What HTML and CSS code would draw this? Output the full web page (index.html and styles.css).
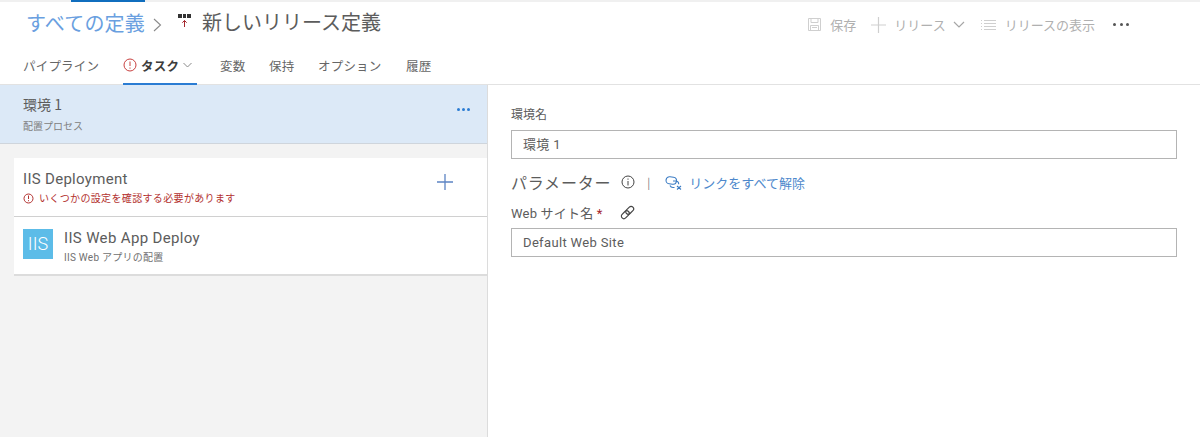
FILE: index.html
```html
<!DOCTYPE html>
<html lang="ja">
<head>
<meta charset="utf-8">
<title>新しいリリース定義</title>
<link rel="stylesheet" href="styles.css">
</head>
<body>
<div class="topstrip"><div class="topstrip-mark"></div></div>
<header class="head">
  <div class="titlebar">
    <div class="crumbs">
      <a class="crumb">すべての定義</a>
      <svg class="crumb-sep" width="9" height="16" viewBox="0 0 9 16"><path d="M1 2l6.500 6-6.500 6" fill="none" stroke="#8a8a8a" stroke-width="1.100"/></svg>
      <svg class="rel-icon" width="15" height="15" viewBox="0 0 15 15"><path d="M1 1h4v4H1zM6 1h3v4H6zM10 1h4v4h-4z" fill="#333"/><path d="M7.500 14V7.500M5.300 9.700l2.200-2.200 2.200 2.200" fill="none" stroke="#a4262c" stroke-width="1"/></svg>
      <h1 class="title">新しいリリース定義</h1>
    </div>
    <div class="commands">
      <span class="cmd cmd-save"><svg width="15" height="15" viewBox="0 0 15 15" fill="none" stroke="#cfcfcf" stroke-width="1"><path d="M1.500 1.500h12v12h-12zM4 1.500v4h7v-4M3.500 13.500v-5h8v5M5 10.500h5"/></svg>保存</span>
      <span class="cmd cmd-release"><svg width="15" height="16" viewBox="0 0 15 16" stroke="#cfcfcf" stroke-width="1.200"><path d="M0 8h15M7.500 0v16"/></svg>リリース<svg class="cmd-chev" width="12" height="8" viewBox="0 0 12 8" fill="none" stroke="#a6a6a6" stroke-width="1.200"><path d="M1 1l5 5 5-5"/></svg></span>
      <span class="cmd cmd-view"><svg width="15" height="12" viewBox="0 0 15 12" stroke="#cfcfcf" stroke-width="1"><path d="M0 1.500h1M3 1.500h12M0 4.500h1M3 4.500h12M0 7.500h1M3 7.500h12M0 10.500h1M3 10.500h12"/></svg>リリースの表示</span>
      <span class="more-dark">
        <i></i><i></i><i></i>
      </span>
    </div>
  </div>
  <nav class="tabs">
    <a class="tab tab-pipeline">パイプライン</a>
    <a class="tab tab-active">
      <svg width="14" height="14" viewBox="0 0 14 14" fill="none" stroke="#c8403f" stroke-width="1"><circle cx="7" cy="7" r="6"/><path d="M7 3.500v4.500M7 9.500v1.200"/></svg>
      <b>タスク</b>
      <svg class="tab-chev" width="9" height="6" viewBox="0 0 9 6" fill="none" stroke="#8a8a8a"><path d="M.5 1l4 4 4-4"/></svg>
    </a>
    <a class="tab tab-vars">変数</a>
    <a class="tab tab-keep">保持</a>
    <a class="tab tab-opt">オプション</a>
    <a class="tab">履歴</a>
  </nav>
</header>
<main class="workspace">
  <section class="left">
    <div class="stage">
      <div>
        <div class="stage-name">環境 1</div>
        <div class="stage-sub">配置プロセス</div>
      </div>
      <span class="more-blue"><i></i><i></i><i></i></span>
    </div>
    <div class="cards">
      <div class="job">
        <div>
          <div class="job-name">IIS Deployment</div>
          <div class="job-warn">
            <svg width="11" height="11" viewBox="0 0 11 11" fill="none" stroke="#b3312f"><circle cx="5.500" cy="5.500" r="4.500"/><path d="M5.500 2.500v3.500M5.500 7.200v1"/></svg>
            いくつかの設定を確認する必要があります
          </div>
        </div>
        <svg class="job-add" width="16" height="16" viewBox="0 0 16 16" stroke="#5c84c4" stroke-width="1.300"><path d="M0 8h16M8 0v16"/></svg>
      </div>
      <div class="task">
        <div class="task-icon">IIS</div>
        <div>
          <div class="task-name">IIS Web App Deploy</div>
          <div class="task-sub">IIS Web アプリの配置</div>
        </div>
      </div>
    </div>
  </section>
  <section class="right">
    <label class="field-label">環境名</label>
    <div class="input input-env">環境 1</div>
    <div class="params">
      <span class="params-title">パラメーター</span>
      <svg class="params-info" width="14" height="14" viewBox="0 0 14 14" fill="none" stroke="#444" stroke-width="1"><circle cx="7" cy="7" r="6"/><path d="M7 6v4.500M7 3.500v1.200"/></svg>
      <span class="params-sep">|</span>
      <svg class="unlink" width="18" height="14" viewBox="0 0 18 14" fill="none" stroke="#3b7cc4" stroke-width="1.100"><rect x="1" y="1" width="10.500" height="7" rx="3.500" transform="rotate(8 6 4.500)"/><path d="M8 5h2.500a3.200 3.200 0 0 1 3.200 3.200M9.500 11.500H8a3.200 3.200 0 0 1-3-2M12 10l4 3.500M16 10l-4 3.500"/></svg>
      <a class="params-link">リンクをすべて解除</a>
    </div>
    <div class="site-row">
      <span class="site-label">Web サイト名 <span class="req">*</span></span>
      <svg width="15" height="15" viewBox="0 0 15 15" fill="none" stroke="#444" stroke-width="1.200"><rect x="7.200" y="0.800" width="5" height="9" rx="2.500" transform="rotate(45 9.700 5.300)"/><rect x="2.800" y="5.200" width="5" height="9" rx="2.500" transform="rotate(45 5.300 9.700)"/></svg>
    </div>
    <div class="input">Default Web Site</div>
  </section>
</main>
</body>
</html>
```

FILE: styles.css
```css
* { box-sizing: border-box; }
html, body { margin: 0; padding: 0; }
body {
  width: 1200px;
  height: 437px;
  overflow: hidden;
  background: #fff;
  color: #555;
  font-family: "Noto Sans CJK JP", "Noto Sans", sans-serif;
  font-size: 12px;
}
.topstrip { height: 2px; background: #f0f0f0; }
.topstrip-mark { width: 74px; height: 2px; margin-left: 71px; background: #106ebe; }
.head { height: 83px; border-bottom: 1px solid #e2e2e2; }
.titlebar { height: 41px; display: flex; justify-content: space-between; align-items: center; padding-left: 26px; padding-right: 71px; }
.crumbs { display: flex; align-items: center; }
.crumb { font-size: 20px; color: #6a9fe0; line-height: 26px; letter-spacing: .2px; }
.crumb-sep { margin-left: 8px; margin-top: 5px; }
.rel-icon { margin-left: 15px; margin-top: -4px; }
.title { margin: -2px 0 0 10px; font-size: 20px; font-weight: 400; color: #5c5c5c; line-height: 26px; }
.commands { display: flex; align-items: center; color: #b0b0b0; font-size: 13px; margin-top: 4px; }
.cmd { display: flex; align-items: center; gap: 9px; }
.cmd-save { gap: 8px; }
.cmd-release { margin-left: 15px; gap: 8px; }
.cmd-chev { margin-left: -1px; }
.cmd-view { margin-left: 16px; }
.more-dark { display: flex; gap: 3.500px; margin-left: 18px; }
.more-dark i { width: 3px; height: 3px; border-radius: 50%; background: #555; }
.tabs { display: flex; height: 42px; padding-left: 23px; }
.tab { display: flex; align-items: center; height: 42px; padding-top: 2px; font-size: 12.500px; color: #666; letter-spacing: .2px; }
.tab-pipeline { width: 100px; }
.tab-active { width: 74px; gap: 4px; border-bottom: 2px solid #2b7cd3; padding-top: 4px; }
.tab-active b { font-weight: 700; color: #3c3c3c; }
.tab-vars { margin-left: 23px; width: 49px; }
.tab-keep { width: 49px; }
.tab-opt { width: 88px; }
.workspace { display: flex; height: 352px; }
.left { width: 488px; flex: none; background: #f3f3f3; border-right: 1px solid #dcdcdc; }
.stage { height: 59px; display: flex; justify-content: space-between; align-items: flex-start; padding: 9px 17px 0 23px; background: #dce9f7; border-bottom: 1px solid #cfd5dc; }
.stage-name { font-size: 14px; line-height: 20px; color: #5c5c5c; }
.stage-sub { font-size: 10px; line-height: 14px; margin-top: 5px; color: #808080; }
.more-blue { display: flex; gap: 2px; margin-top: 14px; }
.more-blue i { width: 3px; height: 3px; border-radius: 50%; background: #2b7cd3; }
.cards { margin: 14px 0 0 14px; background: #fff; }
.job { height: 59px; display: flex; justify-content: space-between; align-items: flex-start; padding: 10px 34px 0 9px; border-bottom: 1px solid #d0d0d0; }
.job-name { font-family: Roboto, "Noto Sans CJK JP", sans-serif; font-size: 15px; line-height: 22px; color: #5c5c5c; letter-spacing: .3px; }
.job-warn { display: flex; align-items: center; gap: 5px; font-size: 10px; line-height: 14px; margin-top: 1px; color: #b3312f; letter-spacing: .35px; }
.job-add { margin-top: 6px; }
.task { height: 59px; display: flex; align-items: flex-start; gap: 11px; padding: 12px 9px 0; border-bottom: 2px solid #dcdcdc; }
.task-icon { width: 30px; height: 30px; background: #5cbce8; color: #fff; font-family: Roboto, sans-serif; font-size: 18px; font-weight: 300; line-height: 30px; text-align: center; }
.task-name { font-family: Roboto, sans-serif; font-size: 15px; line-height: 20px; margin-top: -1px; color: #5c5c5c; letter-spacing: .35px; }
.task-sub { font-family: Roboto, "Noto Sans CJK JP", sans-serif; font-size: 10px; line-height: 14px; margin-top: 3px; color: #707070; letter-spacing: .25px; }
.right { flex: 1; min-width: 0; padding: 20px 23px 0 23px; }
.field-label { display: block; font-size: 12px; line-height: 18px; color: #5c5c5c; }
.input { height: 29px; margin-top: 6px; padding-left: 11px; border: 1px solid #b4b4b4; font-family: Roboto, "Noto Sans CJK JP", sans-serif; font-size: 13px; line-height: 27px; color: #5c5c5c; letter-spacing: .35px; }
.input-env { margin-top: 7px; }
.params { display: flex; align-items: center; margin-top: 13px; height: 20px; }
.params-title { font-size: 16px; letter-spacing: .8px; color: #5c5c5c; }
.params-info { margin-left: 10px; }
.params-sep { margin: 0 15px 0 12px; color: #777; font-size: 11px; }
.params-link { margin-left: 6px; font-size: 13px; color: #4d88cc; }
.unlink { margin-top: 1px; }
.site-row { display: flex; align-items: center; gap: 17px; margin-top: 10px; height: 20px; }
.site-label { font-family: Roboto, "Noto Sans CJK JP", sans-serif; font-size: 13px; color: #5c5c5c; letter-spacing: .2px; }
.req { color: #a4262c; }
.site-row + .input { margin-top: 6px; }
```
